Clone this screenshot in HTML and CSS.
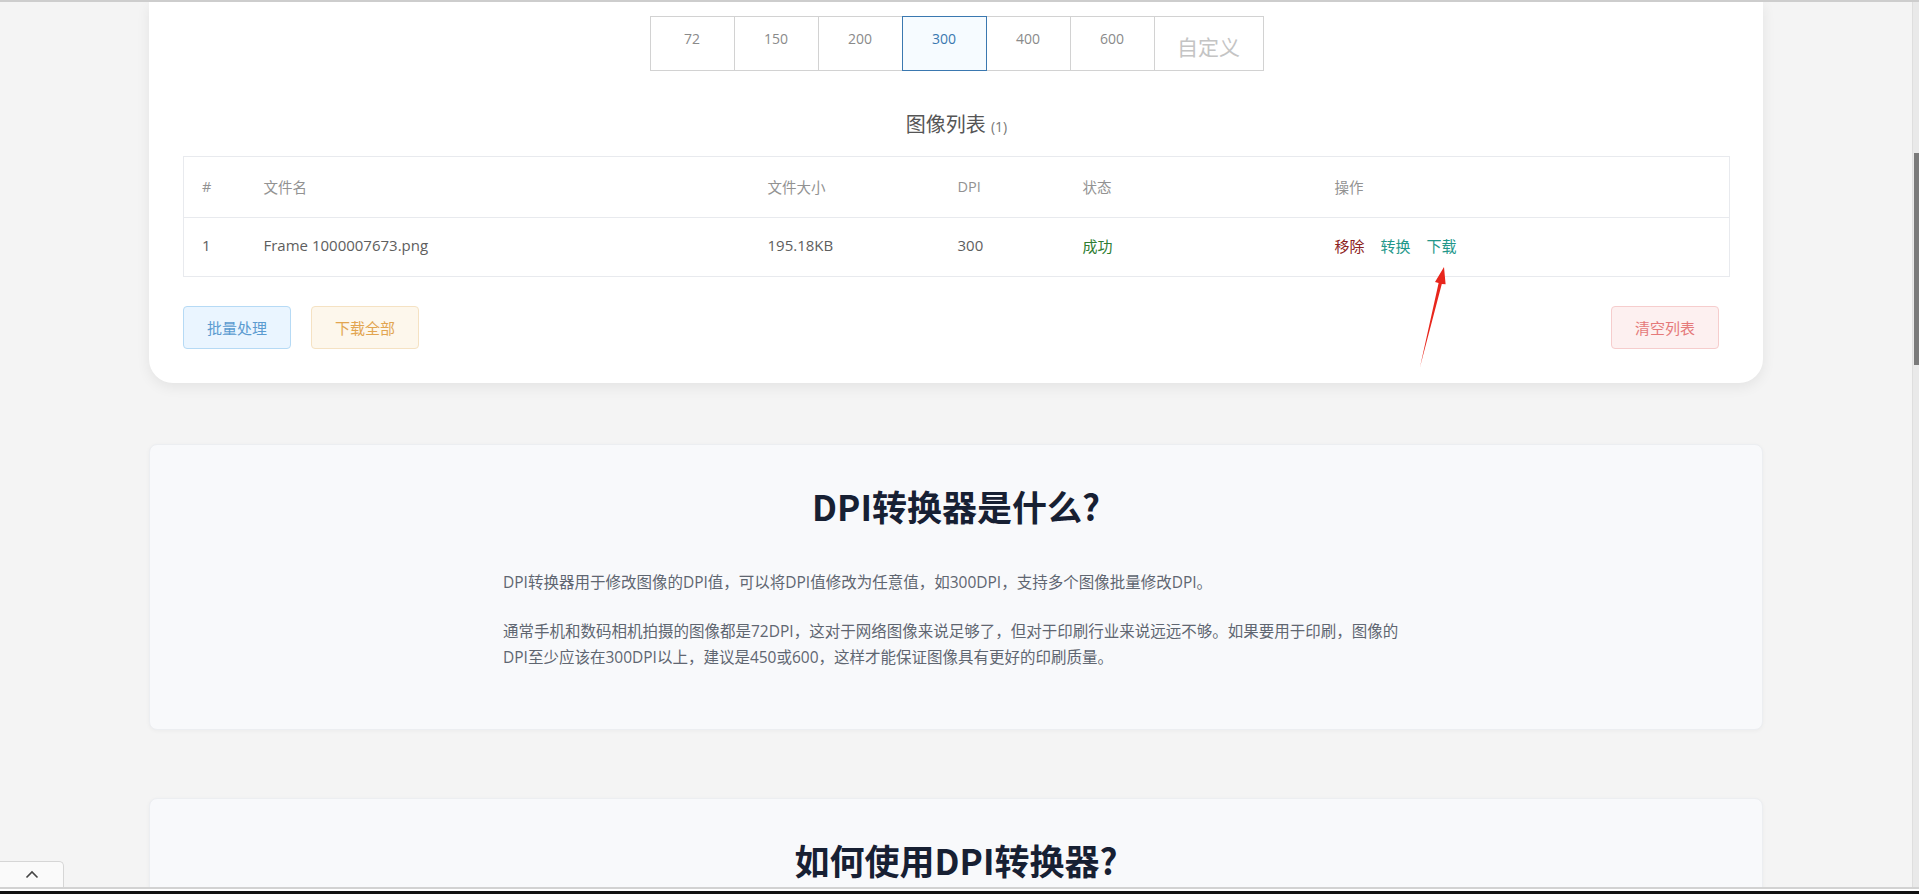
FILE: index.html
```html
<!DOCTYPE html>
<html lang="zh-CN">
<head>
<meta charset="utf-8">
<title>DPI转换器</title>
<link rel="stylesheet" href="styles.css">
</head>
<body>
<div class="viewport">
  <div class="main">
    <section class="card-main">
      <div class="dpi-group">
        <button class="dpi-btn">72</button>
        <button class="dpi-btn">150</button>
        <button class="dpi-btn">200</button>
        <button class="dpi-btn active">300</button>
        <button class="dpi-btn">400</button>
        <button class="dpi-btn">600</button>
        <input class="dpi-input" type="text" placeholder="自定义">
      </div>
      <div class="list-title">图像列表 <span class="count">(1)</span></div>
      <table class="file-table">
        <colgroup>
          <col class="c-idx"><col class="c-name"><col class="c-size"><col class="c-dpi"><col class="c-status"><col class="c-op">
        </colgroup>
        <thead>
          <tr><th>#</th><th>文件名</th><th>文件大小</th><th>DPI</th><th>状态</th><th>操作</th></tr>
        </thead>
        <tbody>
          <tr>
            <td>1</td>
            <td>Frame 1000007673.png</td>
            <td>195.18KB</td>
            <td>300</td>
            <td class="ok">成功</td>
            <td><span class="op remove">移除</span><span class="op teal">转换</span><span class="op teal">下载</span></td>
          </tr>
        </tbody>
      </table>
      <div class="actions">
        <div class="actions-left">
          <button class="btn btn-blue">批量处理</button>
          <button class="btn btn-orange">下载全部</button>
        </div>
        <button class="btn btn-red">清空列表</button>
      </div>
    </section>

    <section class="card-info">
      <h2>DPI转换器是什么?</h2>
      <div class="content">
        <p>DPI转换器用于修改图像的DPI值，可以将DPI值修改为任意值，如300DPI，支持多个图像批量修改DPI。</p>
        <p>通常手机和数码相机拍摄的图像都是72DPI，这对于网络图像来说足够了，但对于印刷行业来说远远不够。如果要用于印刷，图像的DPI至少应该在300DPI以上，建议是450或600，这样才能保证图像具有更好的印刷质量。</p>
      </div>
    </section>

    <section class="card-info card-how">
      <h2>如何使用DPI转换器?</h2>
    </section>
  </div>
  <div class="scrollbar"><div class="thumb"></div></div>
</div>

<svg class="arrow" width="1919" height="894" viewBox="0 0 1919 894">
  <polygon points="1420,367 1438.6,283 1435,282 1444,267 1445.6,284.2 1441.8,284" fill="#e8261c"/>
</svg>

<div class="to-top">
  <svg width="14" height="9" viewBox="0 0 14 9"><path d="M1.5 7.5 L7 2 L12.5 7.5" fill="none" stroke="#444" stroke-width="1.6"/></svg>
</div>
<div class="bottom-bar"></div>
</body>
</html>
```

FILE: styles.css
```css
html, body {
  margin: 0;
  padding: 0;
  height: 894px;
  overflow: hidden;
}
body {
  background: #f4f4f4;
  font-family: "Open Sans", "Noto Sans CJK SC", sans-serif;
  color: #606266;
  position: relative;
}
.viewport {
  height: 894px;
  box-sizing: border-box;
  border-top: 2px solid #cdcdcd;
  display: flex;
  overflow: hidden;
}
.main {
  flex: 1;
  overflow: hidden;
}
.scrollbar {
  width: 6px;
  background: #e9e9e9;
  border-left: 1px solid #dedede;
}
.thumb {
  margin-top: 151px;
  margin-left: 1px;
  height: 212px;
  background: #7a7a7a;
}

/* main card */
.card-main {
  width: 1614px;
  box-sizing: border-box;
  margin: 0 auto;
  background: #fff;
  border-radius: 0 0 24px 24px;
  padding: 14px 33px 34px 34px;
  box-shadow: 0 4px 14px rgba(0, 0, 0, 0.07);
}
.dpi-group {
  display: flex;
  justify-content: center;
  height: 55px;
}
.dpi-btn {
  width: 85px;
  height: 55px;
  box-sizing: border-box;
  border: 1px solid #d2d2d2;
  background: #fff;
  color: #8a8a8a;
  font-family: "Open Sans", "Noto Sans CJK SC", sans-serif;
  font-size: 14px;
  line-height: 20px;
  padding: 12px 0 0;
  display: flex;
  justify-content: center;
  align-items: flex-start;
  margin: 0 0 0 -1px;
  cursor: pointer;
}
.dpi-btn:first-child {
  margin-left: 0;
}
.dpi-btn.active {
  border-color: #3a78b0;
  color: #3a78b0;
  background: #f6fbff;
  position: relative;
  z-index: 1;
}
.dpi-input {
  width: 110px;
  height: 55px;
  box-sizing: border-box;
  border: 1px solid #d2d2d2;
  margin: 0 0 0 -1px;
  text-align: center;
  font-family: "Noto Sans CJK SC", sans-serif;
  font-size: 21px;
  padding: 4px 0 0;
  color: #666;
  outline: none;
}
.dpi-input::placeholder {
  color: #c4c4c4;
}
.list-title {
  margin-top: 40px;
  text-align: center;
  font-size: 20px;
  line-height: 28px;
  color: #555;
}
.list-title .count {
  font-size: 14px;
  color: #777;
}

.file-table {
  margin-top: 15px;
  width: 100%;
  border-collapse: collapse;
  border: 1px solid #e8eaee;
  font-size: 15px;
  table-layout: fixed;
}
.c-idx { width: 62px; }
.c-name { width: 504px; }
.c-size { width: 190px; }
.c-dpi { width: 125px; }
.c-status { width: 252px; }
.file-table th,
.file-table td {
  height: 59px;
  padding: 0 0 0 18px;
  text-align: left;
  vertical-align: middle;
  white-space: nowrap;
}
.file-table th {
  font-weight: normal;
  color: #929292;
  font-size: 14.5px;
  padding-bottom: 1px;
}
.file-table td {
  border-top: 1px solid #e8eaee;
  color: #5e5e5e;
  padding-bottom: 4px;
  box-sizing: border-box;
}
.file-table td.ok {
  color: #2e7d32;
}
.op {
  margin-right: 16px;
}
.op.remove {
  color: #8b2020;
}
.op.teal {
  color: #23978a;
}

.actions {
  margin-top: 29px;
  display: flex;
  justify-content: space-between;
  align-items: center;
}
.actions-left {
  display: flex;
  gap: 20px;
}
.btn {
  height: 43px;
  padding: 0 23px;
  border-radius: 4px;
  font-family: "Noto Sans CJK SC", sans-serif;
  font-size: 15px;
  border: 1px solid;
  cursor: pointer;
}
.btn-blue {
  background: #eaf5ff;
  border-color: #b6daf5;
  color: #5b9bd0;
}
.btn-orange {
  background: #fdf7ec;
  border-color: #f5e2c3;
  color: #e2a550;
}
.btn-red {
  background: #fdf0f0;
  border-color: #f6cdcd;
  color: #e57a7a;
  margin-right: 11px;
}

/* info cards */
.card-info {
  width: 1614px;
  box-sizing: border-box;
  margin: 61px auto 0;
  background: #f8f9fb;
  border: 1px solid #eceef1;
  border-radius: 8px;
  padding: 36px 0 59px;
  box-shadow: 0 1px 4px rgba(0, 0, 0, 0.04);
}
.card-info h2 {
  margin: 0;
  text-align: center;
  font-family: "Noto Sans CJK SC", sans-serif;
  font-size: 35px;
  line-height: 50px;
  font-weight: 700;
  color: #172033;
}
.content {
  width: 906px;
  margin: 38px auto 0;
  font-size: 15.5px;
  line-height: 26px;
  color: #5f6671;
}
.content p {
  margin: 0;
}
.content p + p {
  margin-top: 23px;
}
.card-how {
  margin-top: 68px;
  height: 300px;
}

/* overlays */
.arrow {
  position: absolute;
  left: 0;
  top: 0;
  pointer-events: none;
}
.to-top {
  position: fixed;
  left: 0;
  bottom: 7px;
  width: 63px;
  height: 25px;
  background: #fafafa;
  border-top: 1px solid #d6d6d6;
  border-right: 1px solid #d6d6d6;
  border-radius: 0 5px 0 0;
  display: flex;
  justify-content: center;
  align-items: center;
}
.bottom-bar {
  position: fixed;
  left: 0;
  right: 0;
  bottom: 0;
  height: 2px;
  background: #fff;
  border-top: 2px solid #d2d2d2;
  border-bottom: 3px solid #111;
}
```
